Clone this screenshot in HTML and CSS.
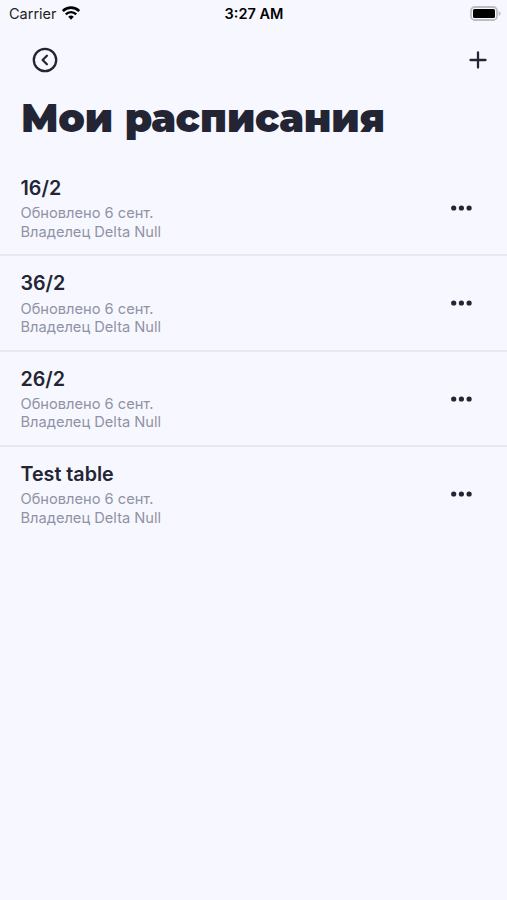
FILE: index.html
```html
<!DOCTYPE html>
<html lang="ru">
<head>
    <meta charset="UTF-8">
    <meta name="viewport" content="width=device-width, initial-scale=1.0">
    <title>Мои расписания</title>
    <link rel="stylesheet" href="styles.css">
</head>
<body>
    <div class="status-bar">
        <div class="carrier">
            <span>Carrier</span>
            <svg class="wifi" width="18" height="14" viewBox="0 0 18 14">
                <path d="M.8 5a11.6 11.6 0 0 1 16.4 0" fill="none" stroke="#000" stroke-width="2.6"/>
                <path d="M3.8 8.3a7.3 7.3 0 0 1 10.4 0" fill="none" stroke="#000" stroke-width="2.4"/>
                <path d="M6.2 10.8a4 4 0 0 1 5.6 0L9 13.7z" fill="#000"/>
            </svg>
        </div>
        <div class="time">3:27 AM</div>
        <svg class="battery" width="31" height="15" viewBox="0 0 31 15">
            <rect x="1" y="1" width="26" height="13" rx="3.8" fill="#f7f8ff" stroke="#bcbcc1" stroke-width="1.8"/>
            <rect x="3" y="3" width="22" height="9" rx="1.5" fill="#000"/>
            <path d="M28.6 5v5c1.3-.5 2-1.4 2-2.5s-.7-2-2-2.500z" fill="#bcbcc1"/>
        </svg>
    </div>

    <header class="toolbar">
        <button class="icon-button" aria-label="Назад">
            <svg width="26" height="26" viewBox="0 0 26 26" fill="none" stroke="#232534" stroke-width="2.3" stroke-linecap="round" stroke-linejoin="round">
                <circle cx="13" cy="13" r="11.2"/>
                <path d="M14.9 8.7L10.6 13l4.3 4.3"/>
            </svg>
        </button>
        <button class="icon-button" aria-label="Добавить">
            <svg width="18" height="18" viewBox="0 0 18 18" fill="none" stroke="#232534" stroke-width="2.3" stroke-linecap="round">
                <path d="M9 1.5v15M1.5 9h15"/>
            </svg>
        </button>
    </header>

    <h1>Мои расписания</h1>

    <ul class="tables">
        <li class="table-item">
            <div class="info">
                <h2>16/2</h2>
                <p>Обновлено 6 сент.</p>
                <p>Владелец Delta Null</p>
            </div>
            <button class="more" aria-label="Ещё">
                <svg width="21" height="6" viewBox="0 0 21 6" fill="#232534"><circle cx="2.7" cy="3" r="2.6"/><circle cx="10.400" cy="3" r="2.6"/><circle cx="18.100" cy="3" r="2.6"/></svg>
            </button>
        </li>
        <li class="table-item">
            <div class="info">
                <h2>36/2</h2>
                <p>Обновлено 6 сент.</p>
                <p>Владелец Delta Null</p>
            </div>
            <button class="more" aria-label="Ещё">
                <svg width="21" height="6" viewBox="0 0 21 6" fill="#232534"><circle cx="2.7" cy="3" r="2.6"/><circle cx="10.400" cy="3" r="2.6"/><circle cx="18.100" cy="3" r="2.6"/></svg>
            </button>
        </li>
        <li class="table-item">
            <div class="info">
                <h2>26/2</h2>
                <p>Обновлено 6 сент.</p>
                <p>Владелец Delta Null</p>
            </div>
            <button class="more" aria-label="Ещё">
                <svg width="21" height="6" viewBox="0 0 21 6" fill="#232534"><circle cx="2.7" cy="3" r="2.6"/><circle cx="10.400" cy="3" r="2.6"/><circle cx="18.100" cy="3" r="2.6"/></svg>
            </button>
        </li>
        <li class="table-item">
            <div class="info">
                <h2>Test table</h2>
                <p>Обновлено 6 сент.</p>
                <p>Владелец Delta Null</p>
            </div>
            <button class="more" aria-label="Ещё">
                <svg width="21" height="6" viewBox="0 0 21 6" fill="#232534"><circle cx="2.7" cy="3" r="2.6"/><circle cx="10.400" cy="3" r="2.6"/><circle cx="18.100" cy="3" r="2.6"/></svg>
            </button>
        </li>
    </ul>
</body>
</html>
```
FILE: styles.css
```css
* {
    box-sizing: border-box;
    margin: 0;
    padding: 0;
}
body {
    min-height: 900px;
    background: #f7f8ff;
    color: #232534;
    font-family: Inter, sans-serif;
}
button {
    background: none;
    border: none;
}
svg {
    display: block;
}
.status-bar {
    display: grid;
    grid-template-columns: 1fr auto 1fr;
    align-items: center;
    height: 27px;
    padding: 0 6px 0 9px;
    color: #000;
    font-size: 14.5px;
}
.carrier {
    display: flex;
    align-items: center;
    gap: 5px;
    color: #222;
}
.wifi {
    margin-bottom: 2px;
}
.time {
    margin-right: 2px;
    font-weight: 600;
}
.battery {
    justify-self: end;
}
.toolbar {
    display: flex;
    align-items: center;
    justify-content: space-between;
    height: 65px;
    padding: 0 20px 0 32px;
}
h1 {
    height: 69px;
    padding-left: 21px;
    font-family: Montserrat, Inter, sans-serif;
    font-size: 39px;
    line-height: 53px;
    font-weight: 900;
    white-space: nowrap;
}
.tables {
    list-style: none;
}
.table-item {
    display: flex;
    align-items: flex-start;
    justify-content: space-between;
    height: 95.33px;
    padding: 14px 35px 0 20.5px;
    border-bottom: 2px solid #e6e8f4;
}
.table-item:last-child {
    border-bottom: none;
}
.table-item h2 {
    margin-bottom: 3.4px;
    font-size: 19.7px;
    line-height: 26px;
    font-weight: 600;
}
.table-item p {
    color: #9192a5;
    font-size: 14.65px;
    line-height: 18.3px;
}
.more {
    margin-top: 30px;
}
```
